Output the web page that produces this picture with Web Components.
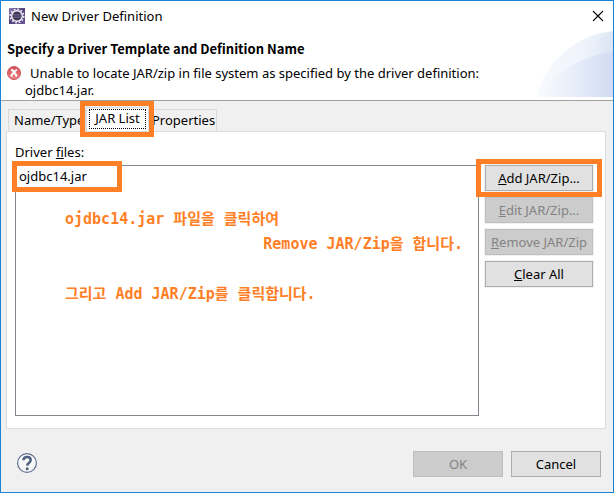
<!DOCTYPE html>
<html lang="en">
<head>
<meta charset="utf-8">
<title>New Driver Definition</title>
<style>
html, body { height: 100%; margin: 0; }
body { font: 13px/18px "Noto Sans", "Noto Sans CJK KR", sans-serif; color: #000; }
</style>
</head>
<body>
<driver-dialog></driver-dialog>
<script>
function define(name, html, setup) {
  const t = document.createElement('template');
  t.innerHTML = '<style>*{box-sizing:border-box}</style>' + html;
  customElements.define(name, class extends HTMLElement {
    constructor() {
      super();
      this.attachShadow({ mode: 'open' }).append(t.content.cloneNode(true));
    }
    connectedCallback() { if (setup) setup(this, this.shadowRoot); }
  });
}

define('call-out', `
<style>
:host { display: block; position: relative; }
i { position: absolute; inset: var(--reach, -7px); border: 5px solid #ff7f27; pointer-events: none; z-index: 3; }
</style>
<slot></slot><i></i>`);

define('push-button', `
<style>
:host { display: block; }
button { display: block; width: 100%; height: 26px; margin: 0; padding: 0; border: 1px solid #adadad; outline: 1px solid #f0f0f0; background: #e1e1e1; color: #000; font: inherit; line-height: 22px; white-space: nowrap; text-align: center; }
button:disabled { background: #ccc; border-color: #bfbfbf; color: #838383; }
</style>
<button type="button"><slot></slot></button>`, (host, root) => {
  root.querySelector('button').disabled = host.hasAttribute('disabled');
});

define('title-bar', `
<style>
:host { display: flex; align-items: center; height: 29px; padding: 0 9px 0 8px; gap: 6px; background: #fff; }
span { flex: 1; }
svg { display: block; }
button { border: 0; padding: 0; background: none; width: 12px; height: 12px; }
</style>
<svg width="16" height="16" viewBox="0 0 16 16">
  <defs><linearGradient id="p" x2="1" y2="1"><stop stop-color="#8d7ab2"/><stop offset=".5" stop-color="#51417b"/><stop offset="1" stop-color="#6c5796"/></linearGradient></defs>
  <rect width="16" height="16" fill="url(#p)"/>
  <circle cx="8" cy="8" r="6.7" fill="none" stroke="#e9e5f2" stroke-width="1.6" stroke-dasharray="1.8 1.708"/>
  <circle cx="8" cy="8" r="5.3" fill="#3e3658" stroke="#f5f3f8" stroke-width="1.4"/>
  <path d="M4 6.5h8M3.5 8h9M4 9.5h8" stroke="#72688f" stroke-width=".7"/>
</svg>
<span><slot></slot></span>
<button type="button" aria-label="Close"><svg width="12" height="12" viewBox="0 0 12 12"><path d="M1 1l10 10M11 1L1 11" stroke="#000" stroke-width="1.1"/></svg></button>`);

define('dialog-header', `
<style>
:host { display: grid; grid-template-columns: 1fr auto; height: 71px; background: #fff; border-bottom: 1px solid #a0a0a0; }
h1 { font: 700 13px/18px "Noto Sans CJK KR", sans-serif; margin: 10px 0 0 6px; }
.msg { display: flex; gap: 4px; margin: 7px 0 0 6px; }
.msg svg { flex: none; margin-top: 1px; }
p { margin: 0; line-height: 17px; text-indent: 5px; }
.art { display: block; align-self: end; margin-bottom: 3px; }
</style>
<div>
  <h1><slot name="title"></slot></h1>
  <div class="msg">
    <svg width="14" height="14" viewBox="0 0 14 14"><defs><linearGradient id="r" x2="0" y2="1"><stop stop-color="#d84d55"/><stop offset="1" stop-color="#e98482"/></linearGradient></defs><circle cx="7" cy="7" r="6.5" fill="url(#r)" stroke="#c9545a"/><path d="M4.2 3.5Q7.2 5 9.8 10.5M10 3.5Q6 6 4 10.5" fill="none" stroke="#fff" stroke-width="2"/></svg>
    <p><slot></slot></p>
  </div>
</div>
<svg class="art" width="75" height="66" viewBox="0 0 75 66">
  <defs>
    <linearGradient id="a"><stop stop-color="#f8fafe"/><stop offset=".6" stop-color="#eff3fb"/><stop offset="1" stop-color="#e3eaf7"/></linearGradient>
    <linearGradient id="b"><stop stop-color="#f9fbfe"/><stop offset=".5" stop-color="#e7edf9"/><stop offset="1" stop-color="#d0dbf2"/></linearGradient>
    <linearGradient id="c"><stop stop-color="#f0f4fb"/><stop offset="1" stop-color="#dbe4f5"/></linearGradient>
  </defs>
  <path d="M0 66C2 38 36 3 75 0V66Z" fill="url(#a)"/>
  <path d="M45 31C52 14 62 4 75 1V31Z" fill="url(#c)"/>
  <path d="M0 66C4 52 34 26 75 21V66Z" fill="url(#b)"/>
</svg>`);

define('tab-strip', `
<style>
:host { display: flex; align-items: flex-end; padding: 0 2px; height: 23px; }
button { font: inherit; height: 22px; padding: 0 4px 2px 5px; margin: 0; border: 1px solid #d9d9d9; border-bottom: 0; background: #f0f0f0; color: #000; white-space: nowrap; text-align: left; }
.name { width: 78px; }
.prop { width: 68px; padding: 0 0 2px 2px; }
call-out { --reach: -6px -5px -6px -6px; }
.on { display: block; width: 63px; height: 24px; background: #fff; padding: 1px 2px 2px; border-bottom: 0; }
.on span { display: block; height: 20px; line-height: 17px; border: 1px dotted #000; text-align: center; }
</style>
<button type="button" role="tab" class="name">Name/Type</button>
<call-out><button type="button" role="tab" aria-selected="true" class="on"><span>JAR List</span></button></call-out>
<button type="button" role="tab" class="prop">Properties</button>`);

define('file-list', `
<style>
:host { display: block; border: 1px solid #828790; background: #fff; min-width: 0; }
call-out { width: 100px; height: 21px; --reach: -5px; margin-left: 1px; }
[role=option] { line-height: 20px; padding-left: 2px; }
</style>
<div role="listbox" aria-label="Driver files"><call-out><div role="option"><slot name="file"></slot></div></call-out><slot></slot></div>`);

define('how-to', `
<style>
:host { display: block; color: #ff7f27; font: 700 15px/25px "DejaVu Sans Mono", "Noto Sans CJK KR", monospace; padding: 20px 15px 0 49px; }
p { margin: 0; height: 25px; white-space: nowrap; }
.next { text-align: right; }
.last { margin-top: 25px; }
</style>
<p lang="ko">ojdbc14.jar 파일을 클릭하여</p>
<p lang="ko" class="next">Remove JAR/Zip을 합니다.</p>
<p lang="ko" class="last">그리고 Add JAR/Zip를 클릭합니다.</p>`);

define('jar-page', `
<style>
:host { display: grid; flex: 1; grid-template: 18px 1fr / 1fr 108px; gap: 4px 6px; padding: 11px 12px 12px 8px; background: #fff; border: 1px solid #dcdcdc; }
label { grid-column: 1 / -1; }
.acts { display: flex; flex-direction: column; gap: 6px; }
call-out { --reach: -6px -9px -6px -9px; }
</style>
<label>Driver <u>f</u>iles:</label>
<file-list><span slot="file">ojdbc14.jar</span><how-to></how-to></file-list>
<div class="acts">
  <call-out><push-button><u>A</u>dd JAR/Zip...</push-button></call-out>
  <push-button disabled><u>E</u>dit JAR/Zip...</push-button>
  <push-button disabled><u>R</u>emove JAR/Zip</push-button>
  <push-button><u>C</u>lear All</push-button>
</div>`);

define('dialog-footer', `
<style>
:host { display: flex; align-items: center; gap: 8px; padding: 22px 12px 15px 15px; }
.help { border: 0; background: none; padding: 0; width: 22px; height: 22px; margin-right: auto; }
svg { display: block; }
push-button { width: 90px; }
</style>
<button class="help" type="button" aria-label="Help"><svg width="22" height="22" viewBox="0 0 22 22"><circle cx="11" cy="10" r="9.4" fill="#f7f7f7" stroke="#61728f" stroke-width="1.2"/><path d="M7.5 7.3C7.5 2.9 14.7 3 14.7 7.2C14.7 9.7 11.4 9.7 11.2 12.7" fill="none" stroke="#506080" stroke-width="2.5"/><circle cx="11.2" cy="15.7" r="1.5" fill="#506080"/></svg></button>
<push-button disabled>OK</push-button>
<push-button>Cancel</push-button>`);

define('driver-dialog', `
<style>
:host { display: flex; flex-direction: column; min-height: 100%; box-sizing: border-box; border: 1px solid #1883d7; background: #f0f0f0; }
main { display: flex; flex-direction: column; flex: 1; margin: 7px 7px 0 5px; }
:host { height: 100%; }
</style>
<title-bar>New Driver Definition</title-bar>
<dialog-header><span slot="title">Specify a Driver Template and Definition Name</span>Unable to locate JAR/zip in file system as specified by the driver definition:<br>ojdbc14.jar.</dialog-header>
<main><tab-strip role="tablist"></tab-strip><jar-page></jar-page></main>
<dialog-footer></dialog-footer>`);
</script>
</body>
</html>
